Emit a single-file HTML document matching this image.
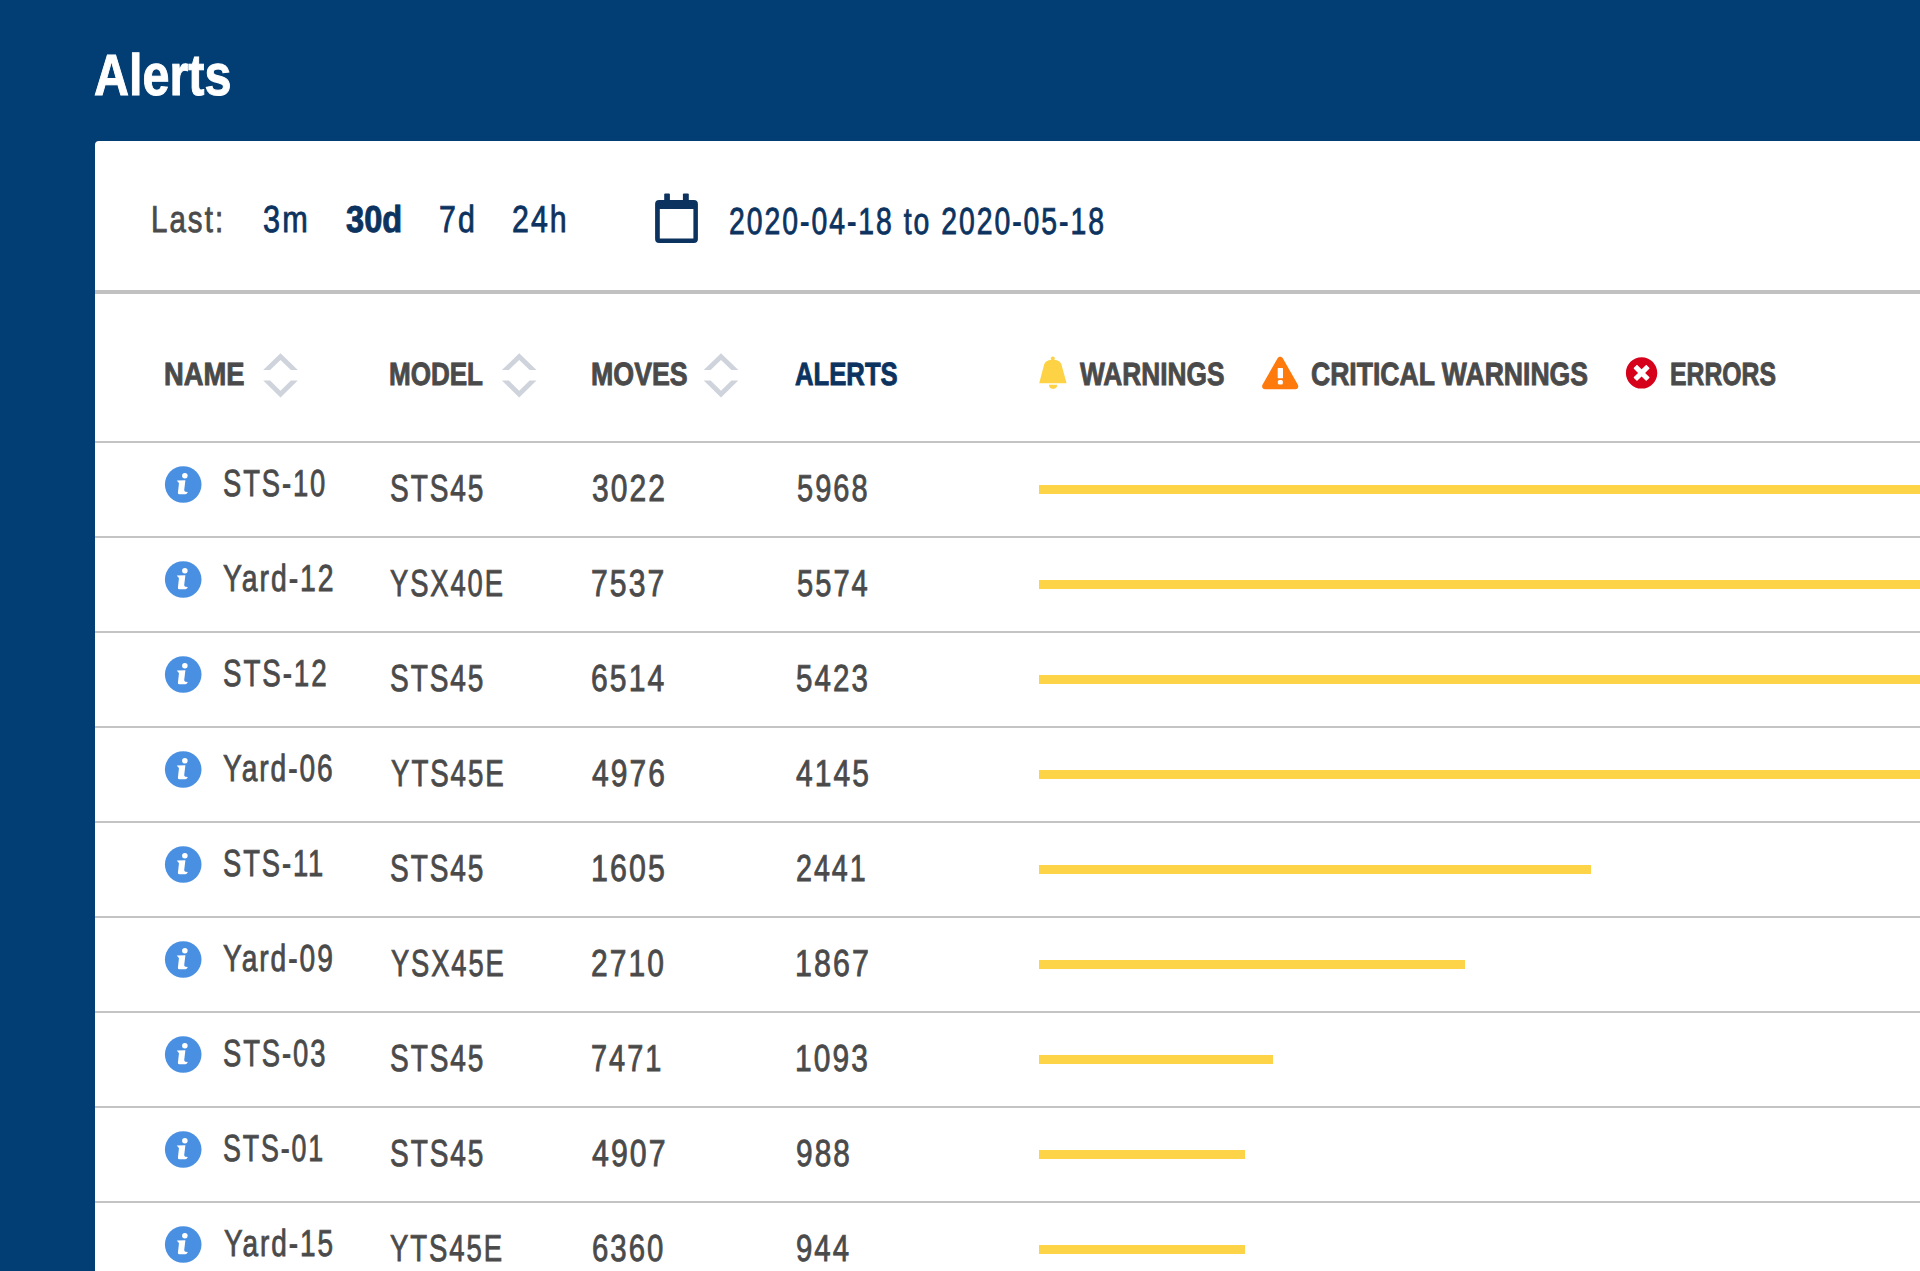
<!DOCTYPE html>
<html><head><meta charset="utf-8"><title>Alerts</title>
<style>
html,body{margin:0;padding:0}
body{width:1920px;height:1271px;overflow:hidden;position:relative;background:#023e73;font-family:"Liberation Sans",sans-serif}
.t{position:absolute;white-space:nowrap;transform-origin:0 0;font-family:"Liberation Sans",sans-serif;text-rendering:geometricPrecision}
.a{position:absolute}
</style></head><body>

<div class="a" style="left:95px;top:141px;width:1840px;height:1140px;background:#fff;border-top-left-radius:4px"></div>
<div class="a" style="left:95px;top:290px;width:1825px;height:4px;background:#c1c1c1"></div>
<div class="a" style="left:95px;top:441px;width:1825px;height:2px;background:#c4c4c4"></div>
<div class="a" style="left:95px;top:536px;width:1825px;height:2px;background:#c4c4c4"></div>
<div class="a" style="left:95px;top:631px;width:1825px;height:2px;background:#c4c4c4"></div>
<div class="a" style="left:95px;top:726px;width:1825px;height:2px;background:#c4c4c4"></div>
<div class="a" style="left:95px;top:821px;width:1825px;height:2px;background:#c4c4c4"></div>
<div class="a" style="left:95px;top:916px;width:1825px;height:2px;background:#c4c4c4"></div>
<div class="a" style="left:95px;top:1011px;width:1825px;height:2px;background:#c4c4c4"></div>
<div class="a" style="left:95px;top:1106px;width:1825px;height:2px;background:#c4c4c4"></div>
<div class="a" style="left:95px;top:1201px;width:1825px;height:2px;background:#c4c4c4"></div>
<div class="a" style="left:1039px;top:485px;width:881px;height:9px;background:#fdd348"></div>
<div class="a" style="left:1039px;top:580px;width:881px;height:9px;background:#fdd348"></div>
<div class="a" style="left:1039px;top:675px;width:881px;height:9px;background:#fdd348"></div>
<div class="a" style="left:1039px;top:770px;width:881px;height:9px;background:#fdd348"></div>
<div class="a" style="left:1039px;top:865px;width:551.5px;height:9px;background:#fdd348"></div>
<div class="a" style="left:1039px;top:960px;width:426px;height:9px;background:#fdd348"></div>
<div class="a" style="left:1039px;top:1055px;width:234px;height:9px;background:#fdd348"></div>
<div class="a" style="left:1039px;top:1150px;width:206px;height:9px;background:#fdd348"></div>
<div class="a" style="left:1039px;top:1245px;width:206px;height:9px;background:#fdd348"></div>
<div class="t" style="left:94.24px;top:47.01px;font-size:58.198px;line-height:58.198px;font-weight:700;-webkit-text-stroke-width:1.0px;letter-spacing:0px;color:#ffffff;transform:scaleX(0.8332)">Alerts</div>
<div class="t" style="left:150.92px;top:200.51px;font-size:37.543px;line-height:37.543px;font-weight:400;-webkit-text-stroke-width:0.85px;letter-spacing:2.6px;color:#4a4a4a;transform:scaleX(0.7853)">Last:</div>
<div class="t" style="left:262.90px;top:200.51px;font-size:37.543px;line-height:37.543px;font-weight:400;-webkit-text-stroke-width:0.85px;letter-spacing:2.6px;color:#0c335f;transform:scaleX(0.8164)">3m</div>
<div class="t" style="left:345.52px;top:200.51px;font-size:37.471px;line-height:37.471px;font-weight:700;-webkit-text-stroke-width:0.9px;letter-spacing:0px;color:#0c335f;transform:scaleX(0.8700)">30d</div>
<div class="t" style="left:438.82px;top:200.51px;font-size:37.543px;line-height:37.543px;font-weight:400;-webkit-text-stroke-width:0.85px;letter-spacing:2.6px;color:#0c335f;transform:scaleX(0.8079)">7d</div>
<div class="t" style="left:511.85px;top:200.51px;font-size:37.543px;line-height:37.543px;font-weight:400;-webkit-text-stroke-width:0.85px;letter-spacing:2.6px;color:#0c335f;transform:scaleX(0.8064)">24h</div>
<div class="t" style="left:729.32px;top:202.71px;font-size:37.543px;line-height:37.543px;font-weight:400;-webkit-text-stroke-width:0.85px;letter-spacing:2.6px;color:#0c335f;transform:scaleX(0.7562)">2020-04-18 to 2020-05-18</div>
<div class="t" style="left:164.35px;top:357.91px;font-size:32.180px;line-height:32.180px;font-weight:700;-webkit-text-stroke-width:0.9px;letter-spacing:0px;color:#4a4a4a;transform:scaleX(0.8500)">NAME</div>
<div class="t" style="left:389.42px;top:357.91px;font-size:32.180px;line-height:32.180px;font-weight:700;-webkit-text-stroke-width:0.9px;letter-spacing:0px;color:#4a4a4a;transform:scaleX(0.8091)">MODEL</div>
<div class="t" style="left:590.78px;top:357.91px;font-size:32.180px;line-height:32.180px;font-weight:700;-webkit-text-stroke-width:0.9px;letter-spacing:0px;color:#4a4a4a;transform:scaleX(0.8323)">MOVES</div>
<div class="t" style="left:795.29px;top:357.91px;font-size:32.180px;line-height:32.180px;font-weight:700;-webkit-text-stroke-width:0.9px;letter-spacing:0px;color:#0c335f;transform:scaleX(0.7983)">ALERTS</div>
<div class="t" style="left:1080.03px;top:357.91px;font-size:32.180px;line-height:32.180px;font-weight:700;-webkit-text-stroke-width:0.9px;letter-spacing:0px;color:#4a4a4a;transform:scaleX(0.8160)">WARNINGS</div>
<div class="t" style="left:1310.97px;top:357.91px;font-size:32.180px;line-height:32.180px;font-weight:700;-webkit-text-stroke-width:0.9px;letter-spacing:0px;color:#4a4a4a;transform:scaleX(0.8257)">CRITICAL WARNINGS</div>
<div class="t" style="left:1669.59px;top:357.91px;font-size:32.180px;line-height:32.180px;font-weight:700;-webkit-text-stroke-width:0.9px;letter-spacing:0px;color:#4a4a4a;transform:scaleX(0.7699)">ERRORS</div>
<div class="t" style="left:223.01px;top:465.11px;font-size:37.543px;line-height:37.543px;font-weight:400;-webkit-text-stroke-width:0.85px;letter-spacing:2.6px;color:#4a4a4a;transform:scaleX(0.7292)">STS-10</div>
<div class="t" style="left:389.68px;top:469.51px;font-size:37.543px;line-height:37.543px;font-weight:400;-webkit-text-stroke-width:0.85px;letter-spacing:2.6px;color:#4a4a4a;transform:scaleX(0.7466)">STS45</div>
<div class="t" style="left:591.67px;top:469.51px;font-size:37.543px;line-height:37.543px;font-weight:400;-webkit-text-stroke-width:0.85px;letter-spacing:2.6px;color:#4a4a4a;transform:scaleX(0.7999)">3022</div>
<div class="t" style="left:797.10px;top:469.51px;font-size:37.543px;line-height:37.543px;font-weight:400;-webkit-text-stroke-width:0.85px;letter-spacing:2.6px;color:#4a4a4a;transform:scaleX(0.7726)">5968</div>
<div class="t" style="left:223.20px;top:560.11px;font-size:37.543px;line-height:37.543px;font-weight:400;-webkit-text-stroke-width:0.85px;letter-spacing:2.6px;color:#4a4a4a;transform:scaleX(0.7556)">Yard-12</div>
<div class="t" style="left:389.91px;top:564.51px;font-size:37.543px;line-height:37.543px;font-weight:400;-webkit-text-stroke-width:0.85px;letter-spacing:2.6px;color:#4a4a4a;transform:scaleX(0.7295)">YSX40E</div>
<div class="t" style="left:591.32px;top:564.51px;font-size:37.543px;line-height:37.543px;font-weight:400;-webkit-text-stroke-width:0.85px;letter-spacing:2.6px;color:#4a4a4a;transform:scaleX(0.8039)">7537</div>
<div class="t" style="left:797.10px;top:564.51px;font-size:37.543px;line-height:37.543px;font-weight:400;-webkit-text-stroke-width:0.85px;letter-spacing:2.6px;color:#4a4a4a;transform:scaleX(0.7756)">5574</div>
<div class="t" style="left:222.60px;top:655.11px;font-size:37.543px;line-height:37.543px;font-weight:400;-webkit-text-stroke-width:0.85px;letter-spacing:2.6px;color:#4a4a4a;transform:scaleX(0.7389)">STS-12</div>
<div class="t" style="left:389.88px;top:659.51px;font-size:37.543px;line-height:37.543px;font-weight:400;-webkit-text-stroke-width:0.85px;letter-spacing:2.6px;color:#4a4a4a;transform:scaleX(0.7466)">STS45</div>
<div class="t" style="left:591.43px;top:659.51px;font-size:37.543px;line-height:37.543px;font-weight:400;-webkit-text-stroke-width:0.85px;letter-spacing:2.6px;color:#4a4a4a;transform:scaleX(0.8017)">6514</div>
<div class="t" style="left:796.09px;top:659.51px;font-size:37.543px;line-height:37.543px;font-weight:400;-webkit-text-stroke-width:0.85px;letter-spacing:2.6px;color:#4a4a4a;transform:scaleX(0.7864)">5423</div>
<div class="t" style="left:223.30px;top:750.11px;font-size:37.543px;line-height:37.543px;font-weight:400;-webkit-text-stroke-width:0.85px;letter-spacing:2.6px;color:#4a4a4a;transform:scaleX(0.7499)">Yard-06</div>
<div class="t" style="left:390.61px;top:754.51px;font-size:37.543px;line-height:37.543px;font-weight:400;-webkit-text-stroke-width:0.85px;letter-spacing:2.6px;color:#4a4a4a;transform:scaleX(0.7378)">YTS45E</div>
<div class="t" style="left:591.60px;top:754.51px;font-size:37.543px;line-height:37.543px;font-weight:400;-webkit-text-stroke-width:0.85px;letter-spacing:2.6px;color:#4a4a4a;transform:scaleX(0.7992)">4976</div>
<div class="t" style="left:795.90px;top:754.51px;font-size:37.543px;line-height:37.543px;font-weight:400;-webkit-text-stroke-width:0.85px;letter-spacing:2.6px;color:#4a4a4a;transform:scaleX(0.7986)">4145</div>
<div class="t" style="left:222.61px;top:845.11px;font-size:37.543px;line-height:37.543px;font-weight:400;-webkit-text-stroke-width:0.85px;letter-spacing:2.6px;color:#4a4a4a;transform:scaleX(0.7288)">STS-11</div>
<div class="t" style="left:389.88px;top:849.51px;font-size:37.543px;line-height:37.543px;font-weight:400;-webkit-text-stroke-width:0.85px;letter-spacing:2.6px;color:#4a4a4a;transform:scaleX(0.7466)">STS45</div>
<div class="t" style="left:591.27px;top:849.51px;font-size:37.543px;line-height:37.543px;font-weight:400;-webkit-text-stroke-width:0.85px;letter-spacing:2.6px;color:#4a4a4a;transform:scaleX(0.8088)">1605</div>
<div class="t" style="left:795.91px;top:849.51px;font-size:37.543px;line-height:37.543px;font-weight:400;-webkit-text-stroke-width:0.85px;letter-spacing:2.6px;color:#4a4a4a;transform:scaleX(0.7625)">2441</div>
<div class="t" style="left:223.30px;top:940.11px;font-size:37.543px;line-height:37.543px;font-weight:400;-webkit-text-stroke-width:0.85px;letter-spacing:2.6px;color:#4a4a4a;transform:scaleX(0.7507)">Yard-09</div>
<div class="t" style="left:390.61px;top:944.51px;font-size:37.543px;line-height:37.543px;font-weight:400;-webkit-text-stroke-width:0.85px;letter-spacing:2.6px;color:#4a4a4a;transform:scaleX(0.7282)">YSX45E</div>
<div class="t" style="left:591.46px;top:944.51px;font-size:37.543px;line-height:37.543px;font-weight:400;-webkit-text-stroke-width:0.85px;letter-spacing:2.6px;color:#4a4a4a;transform:scaleX(0.7989)">2710</div>
<div class="t" style="left:795.07px;top:944.51px;font-size:37.543px;line-height:37.543px;font-weight:400;-webkit-text-stroke-width:0.85px;letter-spacing:2.6px;color:#4a4a4a;transform:scaleX(0.8100)">1867</div>
<div class="t" style="left:222.61px;top:1035.11px;font-size:37.543px;line-height:37.543px;font-weight:400;-webkit-text-stroke-width:0.85px;letter-spacing:2.6px;color:#4a4a4a;transform:scaleX(0.7309)">STS-03</div>
<div class="t" style="left:389.88px;top:1039.51px;font-size:37.543px;line-height:37.543px;font-weight:400;-webkit-text-stroke-width:0.85px;letter-spacing:2.6px;color:#4a4a4a;transform:scaleX(0.7466)">STS45</div>
<div class="t" style="left:591.47px;top:1039.51px;font-size:37.543px;line-height:37.543px;font-weight:400;-webkit-text-stroke-width:0.85px;letter-spacing:2.6px;color:#4a4a4a;transform:scaleX(0.7707)">7471</div>
<div class="t" style="left:795.10px;top:1039.51px;font-size:37.543px;line-height:37.543px;font-weight:400;-webkit-text-stroke-width:0.85px;letter-spacing:2.6px;color:#4a4a4a;transform:scaleX(0.7973)">1093</div>
<div class="t" style="left:222.63px;top:1130.11px;font-size:37.543px;line-height:37.543px;font-weight:400;-webkit-text-stroke-width:0.85px;letter-spacing:2.6px;color:#4a4a4a;transform:scaleX(0.7138)">STS-01</div>
<div class="t" style="left:389.88px;top:1134.51px;font-size:37.543px;line-height:37.543px;font-weight:400;-webkit-text-stroke-width:0.85px;letter-spacing:2.6px;color:#4a4a4a;transform:scaleX(0.7466)">STS45</div>
<div class="t" style="left:591.69px;top:1134.51px;font-size:37.543px;line-height:37.543px;font-weight:400;-webkit-text-stroke-width:0.85px;letter-spacing:2.6px;color:#4a4a4a;transform:scaleX(0.8064)">4907</div>
<div class="t" style="left:795.96px;top:1134.51px;font-size:37.543px;line-height:37.543px;font-weight:400;-webkit-text-stroke-width:0.85px;letter-spacing:2.6px;color:#4a4a4a;transform:scaleX(0.7943)">988</div>
<div class="t" style="left:223.80px;top:1225.11px;font-size:37.543px;line-height:37.543px;font-weight:400;-webkit-text-stroke-width:0.85px;letter-spacing:2.6px;color:#4a4a4a;transform:scaleX(0.7454)">Yard-15</div>
<div class="t" style="left:390.41px;top:1229.51px;font-size:37.543px;line-height:37.543px;font-weight:400;-webkit-text-stroke-width:0.85px;letter-spacing:2.6px;color:#4a4a4a;transform:scaleX(0.7332)">YTS45E</div>
<div class="t" style="left:592.16px;top:1229.51px;font-size:37.543px;line-height:37.543px;font-weight:400;-webkit-text-stroke-width:0.85px;letter-spacing:2.6px;color:#4a4a4a;transform:scaleX(0.7823)">6360</div>
<div class="t" style="left:796.18px;top:1229.51px;font-size:37.543px;line-height:37.543px;font-weight:400;-webkit-text-stroke-width:0.85px;letter-spacing:2.6px;color:#4a4a4a;transform:scaleX(0.7823)">944</div>
<svg class="a" style="left:0;top:0" width="1920" height="1271" viewBox="0 0 1920 1271">
<path fill="#0c335f" fill-rule="evenodd" d="M659.1,200.1 H693.9 Q697.9,200.1 697.9,204.1 V238.9 Q697.9,242.9 693.9,242.9 H659.1 Q655.1,242.9 655.1,238.9 V204.1 Q655.1,200.1 659.1,200.1 Z M659.8,208.9 V238.5 H693.4 V208.9 Z"/>
<rect x="664.2" y="193.5" width="5.7" height="9" rx="1" fill="#0c335f"/>
<rect x="682.9" y="193.5" width="5.9" height="9" rx="1" fill="#0c335f"/>
<path fill="#cfd3dc" d="M263.2,370.1 L280.5,353.2 L297.8,370.1 L290.9,370.1 L280.5,360.0 L270.1,370.1 Z M263.2,380.6 L280.5,397.6 L297.8,380.6 L290.9,380.6 L280.5,390.8 L270.1,380.6 Z"/>
<path fill="#cfd3dc" d="M501.90000000000003,370.1 L519.2,353.2 L536.5,370.1 L529.6,370.1 L519.2,360.0 L508.80000000000007,370.1 Z M501.90000000000003,380.6 L519.2,397.6 L536.5,380.6 L529.6,380.6 L519.2,390.8 L508.80000000000007,380.6 Z"/>
<path fill="#cfd3dc" d="M703.7,370.1 L721.0,353.2 L738.3,370.1 L731.4,370.1 L721.0,360.0 L710.6,370.1 Z M703.7,380.6 L721.0,397.6 L738.3,380.6 L731.4,380.6 L721.0,390.8 L710.6,380.6 Z"/>
<path fill="#fdd245" d="M1039.2,383.2 L1043.2,368 Q1043.6,359.8 1052.8,359.4 Q1062,359.8 1062.4,368 L1066.6,383.2 Z"/><circle cx="1052.8" cy="358.4" r="2" fill="#fdd245"/><path fill="#fdd245" d="M1049,384.8 H1057.2 A4.1,4.1 0 0 1 1049,384.8 Z"/>
<path fill="#fe7a0c" transform="translate(1262.1,356.7) scale(0.06285,0.06348)" d="M569.517 440.013C587.975 472.007 564.806 512 527.94 512H48.054c-36.937 0-59.999-40.055-41.577-71.987L246.423 24.028c18.467-32.009 64.72-31.951 83.154 0l239.94 415.985z"/>
<rect x="1277.7" y="368.1" width="5.3" height="10.1" rx="0.6" fill="#fff"/><rect x="1277.8" y="380.1" width="5.1" height="4.4" rx="1.6" fill="#fff"/>
<path fill="#d6021c" transform="translate(1625.39,356.69) scale(0.06331)" d="M256 8C119 8 8 119 8 256s111 248 248 248 248-111 248-248S393 8 256 8zm121.6 313.1c4.7 4.7 4.7 12.3 0 17L338 377.6c-4.7 4.7-12.3 4.7-17 0L256 312l-65.1 65.6c-4.7 4.7-12.3 4.7-17 0L134.4 338c-4.7-4.7-4.7-12.3 0-17l65.6-65-65.6-65.1c-4.7-4.7-4.7-12.3 0-17l39.6-39.6c4.7-4.7 12.3-4.7 17 0l65 65.7 65.1-65.6c4.7-4.7 12.3-4.7 17 0l39.6 39.6c4.7 4.7 4.7 12.3 0 17L312 256l65.6 65.1z"/>
<g transform="translate(183.2,484.5)"><circle r="18.3" fill="#4a90e2"/><circle cx="1.66" cy="-8.7" r="2.77" fill="#fff"/><path fill="#fff" d="M-6.4,-3.9 L2.2,-4.15 L1.0,5.6 Q0.9,7.0 2.2,7.2 L4.6,7.5 Q4.0,9.0 3.0,9.5 Q2.2,9.85 0.9,9.85 L-3.6,9.85 Q-5.5,9.85 -5.3,8.2 L-4.25,-1.1 Q-4.3,-1.9 -5.0,-2.2 Z"/></g>
<g transform="translate(183.2,579.5)"><circle r="18.3" fill="#4a90e2"/><circle cx="1.66" cy="-8.7" r="2.77" fill="#fff"/><path fill="#fff" d="M-6.4,-3.9 L2.2,-4.15 L1.0,5.6 Q0.9,7.0 2.2,7.2 L4.6,7.5 Q4.0,9.0 3.0,9.5 Q2.2,9.85 0.9,9.85 L-3.6,9.85 Q-5.5,9.85 -5.3,8.2 L-4.25,-1.1 Q-4.3,-1.9 -5.0,-2.2 Z"/></g>
<g transform="translate(183.2,674.5)"><circle r="18.3" fill="#4a90e2"/><circle cx="1.66" cy="-8.7" r="2.77" fill="#fff"/><path fill="#fff" d="M-6.4,-3.9 L2.2,-4.15 L1.0,5.6 Q0.9,7.0 2.2,7.2 L4.6,7.5 Q4.0,9.0 3.0,9.5 Q2.2,9.85 0.9,9.85 L-3.6,9.85 Q-5.5,9.85 -5.3,8.2 L-4.25,-1.1 Q-4.3,-1.9 -5.0,-2.2 Z"/></g>
<g transform="translate(183.2,769.5)"><circle r="18.3" fill="#4a90e2"/><circle cx="1.66" cy="-8.7" r="2.77" fill="#fff"/><path fill="#fff" d="M-6.4,-3.9 L2.2,-4.15 L1.0,5.6 Q0.9,7.0 2.2,7.2 L4.6,7.5 Q4.0,9.0 3.0,9.5 Q2.2,9.85 0.9,9.85 L-3.6,9.85 Q-5.5,9.85 -5.3,8.2 L-4.25,-1.1 Q-4.3,-1.9 -5.0,-2.2 Z"/></g>
<g transform="translate(183.2,864.5)"><circle r="18.3" fill="#4a90e2"/><circle cx="1.66" cy="-8.7" r="2.77" fill="#fff"/><path fill="#fff" d="M-6.4,-3.9 L2.2,-4.15 L1.0,5.6 Q0.9,7.0 2.2,7.2 L4.6,7.5 Q4.0,9.0 3.0,9.5 Q2.2,9.85 0.9,9.85 L-3.6,9.85 Q-5.5,9.85 -5.3,8.2 L-4.25,-1.1 Q-4.3,-1.9 -5.0,-2.2 Z"/></g>
<g transform="translate(183.2,959.5)"><circle r="18.3" fill="#4a90e2"/><circle cx="1.66" cy="-8.7" r="2.77" fill="#fff"/><path fill="#fff" d="M-6.4,-3.9 L2.2,-4.15 L1.0,5.6 Q0.9,7.0 2.2,7.2 L4.6,7.5 Q4.0,9.0 3.0,9.5 Q2.2,9.85 0.9,9.85 L-3.6,9.85 Q-5.5,9.85 -5.3,8.2 L-4.25,-1.1 Q-4.3,-1.9 -5.0,-2.2 Z"/></g>
<g transform="translate(183.2,1054.5)"><circle r="18.3" fill="#4a90e2"/><circle cx="1.66" cy="-8.7" r="2.77" fill="#fff"/><path fill="#fff" d="M-6.4,-3.9 L2.2,-4.15 L1.0,5.6 Q0.9,7.0 2.2,7.2 L4.6,7.5 Q4.0,9.0 3.0,9.5 Q2.2,9.85 0.9,9.85 L-3.6,9.85 Q-5.5,9.85 -5.3,8.2 L-4.25,-1.1 Q-4.3,-1.9 -5.0,-2.2 Z"/></g>
<g transform="translate(183.2,1149.5)"><circle r="18.3" fill="#4a90e2"/><circle cx="1.66" cy="-8.7" r="2.77" fill="#fff"/><path fill="#fff" d="M-6.4,-3.9 L2.2,-4.15 L1.0,5.6 Q0.9,7.0 2.2,7.2 L4.6,7.5 Q4.0,9.0 3.0,9.5 Q2.2,9.85 0.9,9.85 L-3.6,9.85 Q-5.5,9.85 -5.3,8.2 L-4.25,-1.1 Q-4.3,-1.9 -5.0,-2.2 Z"/></g>
<g transform="translate(183.2,1244.5)"><circle r="18.3" fill="#4a90e2"/><circle cx="1.66" cy="-8.7" r="2.77" fill="#fff"/><path fill="#fff" d="M-6.4,-3.9 L2.2,-4.15 L1.0,5.6 Q0.9,7.0 2.2,7.2 L4.6,7.5 Q4.0,9.0 3.0,9.5 Q2.2,9.85 0.9,9.85 L-3.6,9.85 Q-5.5,9.85 -5.3,8.2 L-4.25,-1.1 Q-4.3,-1.9 -5.0,-2.2 Z"/></g>
</svg>
</body></html>
